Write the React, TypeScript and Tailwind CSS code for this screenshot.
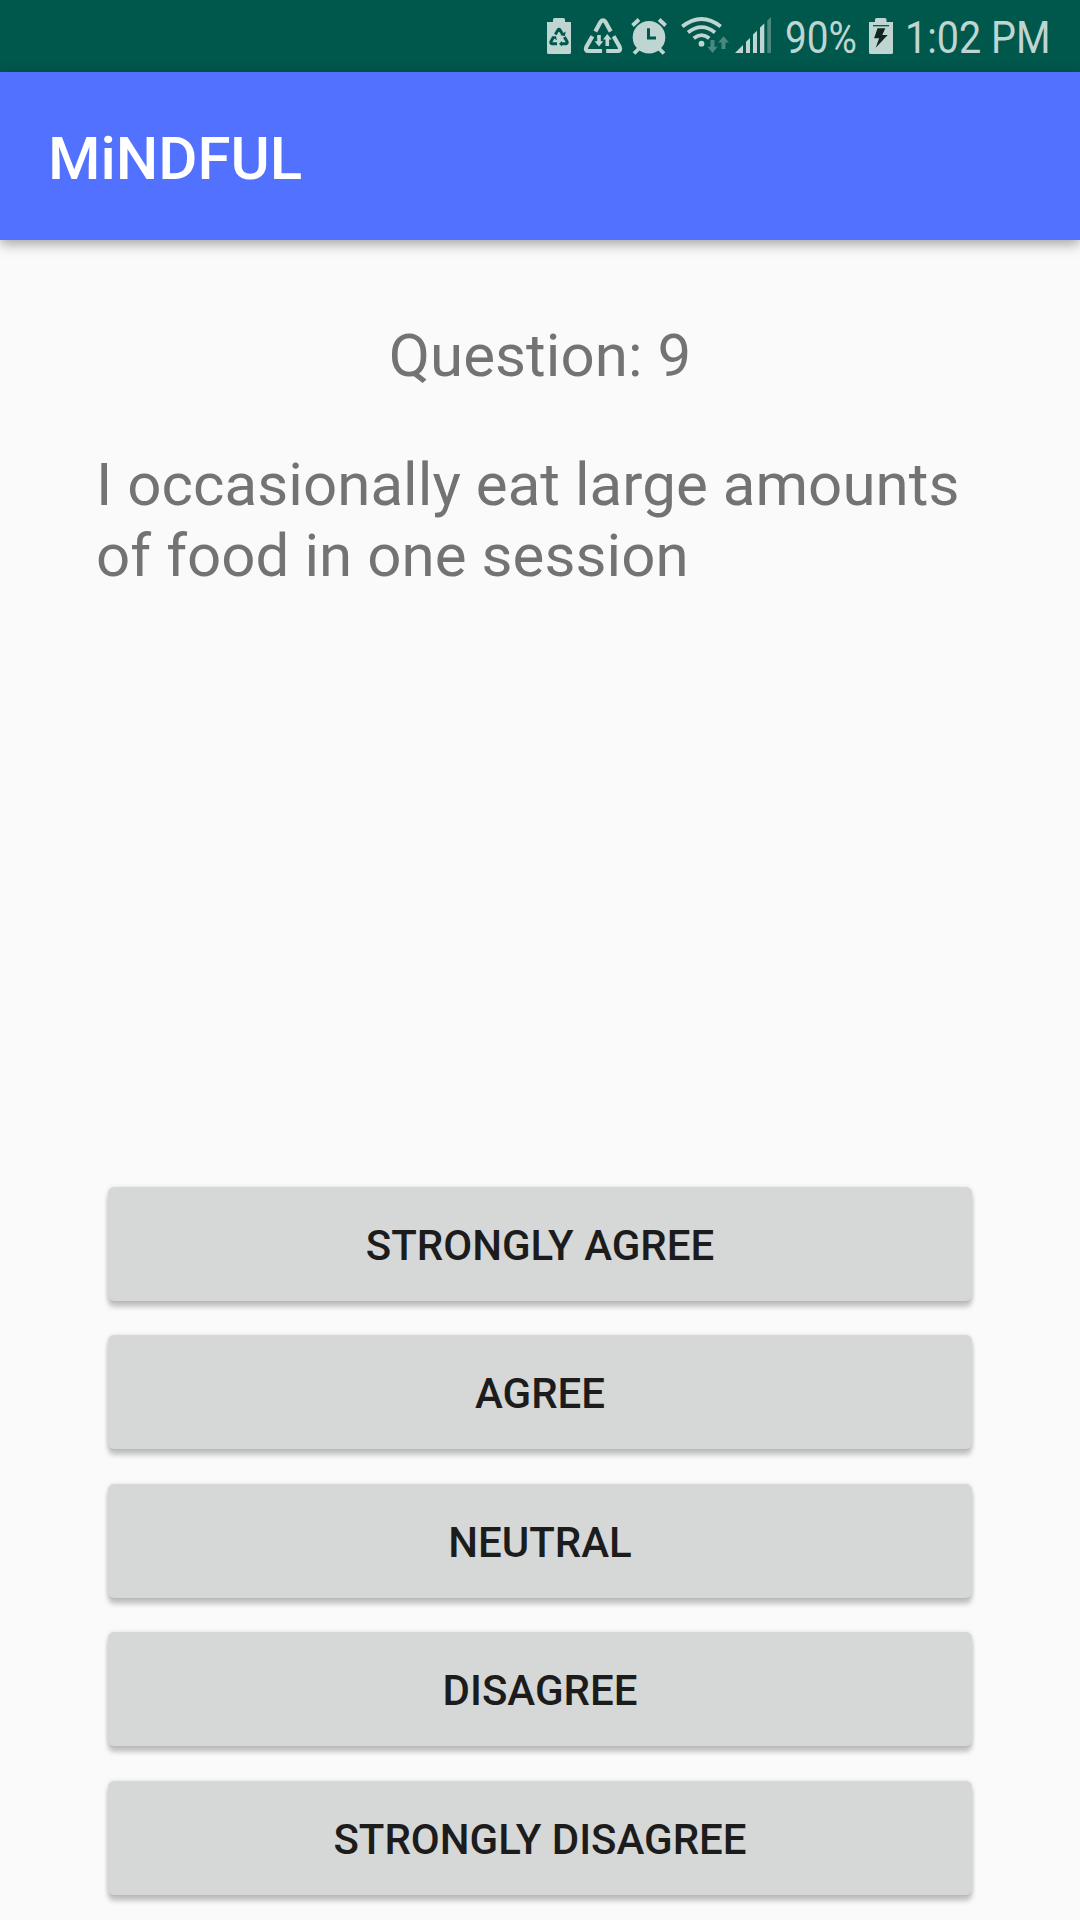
import type { ReactNode } from "react";

const INK = "#bfd5d2";
const BAR = "#00574b";

function Glyph({ x, w, children, className }: { x: number; w: number; children: ReactNode; className: string }) {
  return (
    <svg width={w} height={72} viewBox={`${x} 0 ${w} 72`} className={className} aria-hidden="true">
      {children}
    </svg>
  );
}

function StatusBar() {
  return (
    <header className="flex h-[72px] shrink-0 items-center bg-[#00574b] pl-[547px] text-[#bfd5d2]">
      <Glyph x={547} w={24} className="shrink-0">
        <path d="M547 22h6v-2.500q0-1.500 1.500-1.500h9q1.500 0 1.500 1.500V22h6v30.500q0 1.500-1.500 1.500h-21q-1.500 0-1.500-1.500z" fill={INK} />
        <g fill="none" stroke={BAR} strokeWidth="3">
          <path d="M555.300 34.500l2.700-4.500q1-1.300 2 0l2.700 4.500" />
          <path d="M553.600 37l-2.600 4.500q-.8 2 1.200 2.300h4.800" />
          <path d="M564.400 37l2.600 4.500q.8 2-1.200 2.300h-4.800" />
        </g>
        <path d="M560.500 35.200l4.500.800.600-4.500zM551.500 36.800l4.300-.9 1.200 4.300zM562 41v5.600l-3-2.800z" fill={BAR} />
      </Glyph>
      <Glyph x={583} w={40} className="ml-[12px] shrink-0">
        <g fill="none" stroke={INK} strokeWidth="4.200" strokeLinejoin="round">
          <path d="M595.300 31.500L600.500 22q2.500-3.300 5 0l5.200 9.500" />
          <path d="M592.400 36.300l-6 10.500q-1.600 4.200 2.200 4.200h13.400" />
          <path d="M613.600 36.300l6 10.500q1.600 4.200-2.200 4.200h-11.200" />
        </g>
        <path d="M597.200 35h3.600v6.200h2.500L599 46.500l-4.500-5.300h2.700zM605.500 46v-6.500h-2.500l4.300-5.500 4.300 5.500h-2.500V46z" fill={INK} />
      </Glyph>
      <Glyph x={631} w={37} className="ml-[8px] shrink-0">
        <circle cx="649" cy="37.300" r="16.300" fill={INK} />
        <path d="M632.500 25.500l6.500-6M665.600 25.500l-6.500-6M639 48.500l-5 5M659 48.500l5 5" stroke={INK} strokeWidth="3.800" />
        <path d="M648.500 28.300v9.700h7.500" fill="none" stroke={BAR} strokeWidth="3" />
      </Glyph>
      <Glyph x={680} w={50} className="ml-[12px] shrink-0">
        <g fill="none" stroke={INK} strokeWidth="3.800">
          <path d="M682.300 26.600q19.200-15.200 38.400 0" />
          <path d="M688 32.500q13.500-10.800 27 0" />
          <path d="M693.700 38.300q7.800-6.400 15.600 0" />
        </g>
        <circle cx="701.500" cy="43.700" r="2.900" fill={INK} />
        <path d="M710.500 40h4v6.800h3.200L712.500 53l-5.200-6.200h3.200zM721.500 49v-6.500h-3.300l5.300-6.200 5.500 6.200h-3.500V49z" fill="#4b897f" />
      </Glyph>
      <Glyph x={734} w={39} className="ml-[4px] shrink-0">
        <path d="M735 53l8-8v8zM746 53V41.800l4-3.800v15zM753 53V34.600l4-3.800V53zM760 53V27.400l4.300-3.900V53z" fill={INK} />
        <path d="M767.300 53V20.500l3.700-3.500v36z" fill="#4b897f" />
      </Glyph>
      <div className="ml-[12px] w-[84px] shrink-0 pt-[3px]">
        <span className="inline-block origin-left scale-x-[0.860] text-[45px] leading-[72px]">90%</span>
      </div>
      <Glyph x={869} w={24} className="shrink-0">
        <path d="M869 22h6v-2.500q0-1.500 1.500-1.500h8.500q1.500 0 1.500 1.500V22h6.500v30.500q0 1.500-1.500 1.500h-21q-1.500 0-1.500-1.500z" fill={INK} />
        <path d="M873 25.700h16" stroke={BAR} strokeWidth="1.300" />
        <path d="M877.500 28.300h7.800l-3 6.700h5.400l-12 12.800 3.400-9.500h-5z" fill="#12251f" />
      </Glyph>
      <div className="ml-[12px] pt-[3px]">
        <span className="inline-block origin-left scale-x-[0.878] whitespace-nowrap text-[45px] leading-[72px]">
          1:02 PM
        </span>
      </div>
    </header>
  );
}

const answers = ["Strongly agree", "Agree", "Neutral", "Disagree", "Strongly disagree"];

export default function App() {
  return (
    <div className="flex h-[1920px] w-[1080px] flex-col overflow-hidden bg-[#fafafa] font-['Roboto',sans-serif]">
      <StatusBar />
      <div className="flex h-[168px] shrink-0 items-center bg-[#5271ff] px-[48px] pt-1 shadow-[0_4px_12px_rgba(0,0,0,0.350)]">
        <h1 className="text-[60px] leading-[71px] font-medium text-white">MiNDFUL</h1>
      </div>
      <main className="flex flex-1 flex-col px-24">
        <h2 className="mt-[80px] text-center text-[60px] leading-[71px] tracking-[0.080px] text-[#737373]">Question: 9</h2>
        <p className="mt-[58px] text-[60px] leading-[71px] tracking-[0.06px] text-[#737373]">
          I occasionally eat large amounts of food in one session
        </p>
        <div className="mt-auto mb-[25.400px] flex flex-col gap-[34.400px] px-3">
          {answers.map((a) => (
            <button
              key={a}
              className="h-[114px] rounded-[6px] bg-[#d6d8d7] pt-[4px] text-[42px] leading-[50px] font-medium text-[#1c1c1c] uppercase shadow-[0_6px_5px_rgba(0,0,0,0.220),0_0_4px_rgba(0,0,0,0.120)]"
            >
              {a}
            </button>
          ))}
        </div>
      </main>
    </div>
  );
}
